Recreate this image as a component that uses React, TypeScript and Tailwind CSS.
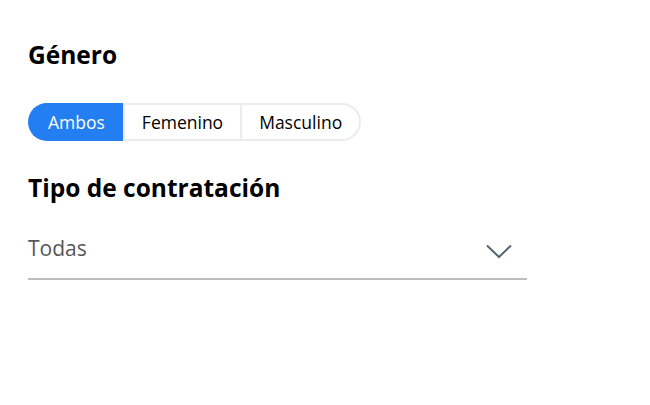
import React, { useState } from "react";

const options = ["Ambos", "Femenino", "Masculino"];

export default function App() {
  const [gender, setGender] = useState("Ambos");

  return (
    <div className="min-h-screen bg-white pl-[28px] pt-[39px] font-['Open_Sans',sans-serif]">
      <h2 className="text-[24.5px] font-bold leading-[32px] text-black">Género</h2>
      <div className="mt-[32px] inline-flex">
        {options.map((option, index) => {
          const active = gender === option;
          return (
            <button
              key={option}
              onClick={() => setGender(option)}
              className={
                (index === 0 ? "rounded-l-full border-l-2 " : "border-l-2 ") +
                (index === options.length - 1 ? "rounded-r-full border-r-2 " : "") +
                (active
                  ? "border-[#237ef2] bg-[#237ef2] px-[18px] font-medium text-white "
                  : "border-[#ececec] bg-white px-[17px] text-black ") +
                "border-y-2 text-[17.5px] leading-[34px]"
              }
            >
              {option}
            </button>
          );
        })}
      </div>
      <h2 className="mt-[31px] text-[24.5px] font-bold leading-[32px] text-black">
        Tipo de contratación
      </h2>
      <div className="mt-[30px] flex w-[499px] items-center justify-between border-b-2 border-[#bdbdbd] pb-[16px] pr-[15px]">
        <span className="text-[21px] leading-[28px] text-[#575757]">Todas</span>
        <svg className="mt-[6px]" width="26" height="15" viewBox="0 0 26 15" fill="none">
          <path d="M1 1.5 L13 13 L25 1.5" stroke="#546674" strokeWidth="2" />
        </svg>
      </div>
    </div>
  );
}
